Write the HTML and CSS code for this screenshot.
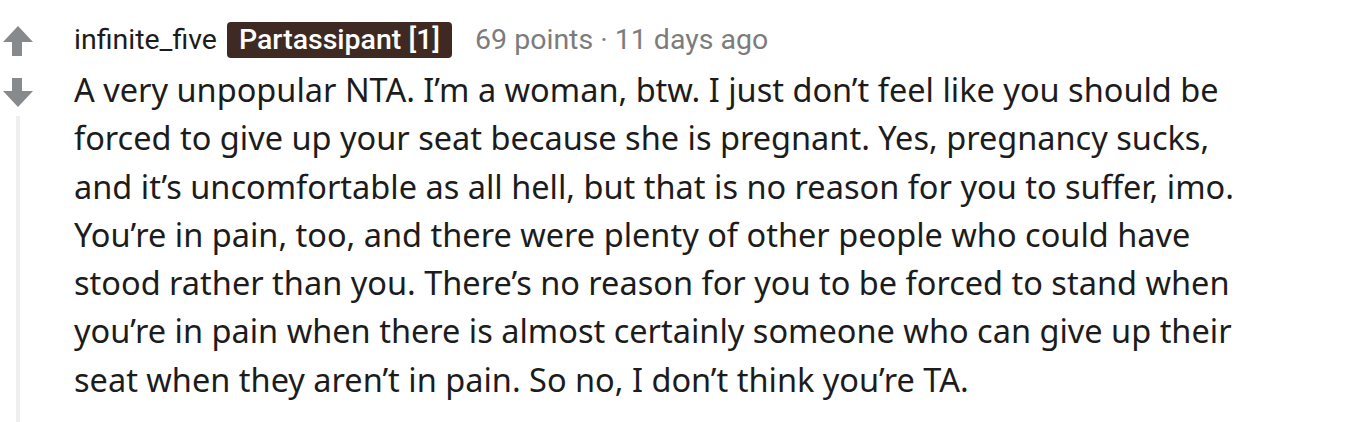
FILE: index.html
```html
<!DOCTYPE html>
<html>
<head>
<meta charset="utf-8">
<link rel="stylesheet" href="styles.css">
</head>
<body>
<div class="comment">
  <div class="gutter">
    <svg class="vote" width="36" height="34" viewBox="0 0 36 34"><path d="M18 2 L33 18 L22 18 L22 32 L12 32 L12 18 L3 18 Z" fill="#878a8c"/></svg>
    <svg class="vote down" width="36" height="34" viewBox="0 0 36 34"><path d="M12 2 L22 2 L22 15 L33 15 L18 31 L3 15 L12 15 Z" fill="#878a8c"/></svg>
    <div class="thread-line"></div>
  </div>
  <div class="main">
    <div class="meta">
      <span class="author">infinite_five</span>
      <span class="flair">Partassipant [1]</span>
      <span class="score">69 points · 11 days ago</span>
    </div>
    <p class="body">A very unpopular NTA. I’m a woman, btw. I just don’t feel like you should be forced to give up your seat because she is pregnant. Yes, pregnancy sucks, and it’s uncomfortable as all hell, but that is no reason for you to suffer, imo. You’re in pain, too, and there were plenty of other people who could have stood rather than you. There’s no reason for you to be forced to stand when you’re in pain when there is almost certainly someone who can give up their seat when they aren’t in pain. So no, I don’t think you’re TA.</p>
  </div>
</div>
</body>
</html>
```
FILE: styles.css
```css
html, body {
  margin: 0;
  padding: 0;
  background: #ffffff;
}
.comment {
  display: flex;
  height: 422px;
  overflow: hidden;
}
.gutter {
  width: 74px;
  flex: none;
  display: flex;
  flex-direction: column;
  padding-top: 24px;
  box-sizing: border-box;
}
.vote {
  display: block;
}
.vote.down {
  margin-top: 18px;
}
.thread-line {
  width: 4px;
  margin-left: 16px;
  margin-top: 6px;
  flex: 1;
  background: #edeff1;
}
.main {
  flex: 1;
  padding-top: 21px;
}
.meta {
  display: flex;
  align-items: center;
  height: 37px;
  font-family: "Roboto", "Liberation Sans", sans-serif;
  font-size: 28.5px;
}
.author {
  color: #1c1c1c;
}
.flair {
  margin-left: 10px;
  background: #3e2a22;
  color: #ffffff;
  font-weight: 500;
  border-radius: 4px;
  padding: 0 12px;
  height: 36px;
  line-height: 36px;
}
.score {
  margin-left: 23px;
  color: #7c7c7c;
}
.body {
  margin: 8px 0 0 0;
  width: 1200px;
  font-family: "Noto Sans", sans-serif;
  font-size: 32.5px;
  line-height: 48.3px;
  color: #1c1c1c;
}
```
